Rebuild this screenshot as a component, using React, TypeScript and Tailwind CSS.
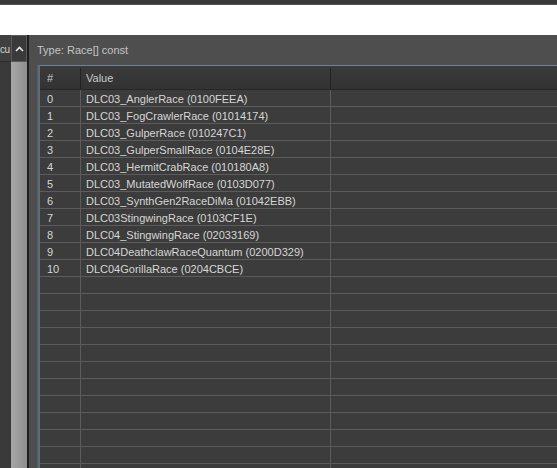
import React from 'react';

const races = [
    'DLC03_AnglerRace (0100FEEA)',
    'DLC03_FogCrawlerRace (01014174)',
    'DLC03_GulperRace (010247C1)',
    'DLC03_GulperSmallRace (0104E28E)',
    'DLC03_HermitCrabRace (010180A8)',
    'DLC03_MutatedWolfRace (0103D077)',
    'DLC03_SynthGen2RaceDiMa (01042EBB)',
    'DLC03StingwingRace (0103CF1E)',
    'DLC04_StingwingRace (02033169)',
    'DLC04DeathclawRaceQuantum (0200D329)',
    'DLC04GorillaRace (0204CBCE)',
];

export default function App() {
    // pad out with empty rows so the grid runs to the bottom edge
    const rows = [...races, ...Array(14).fill('')];

    return (
        <div className="w-[557px] h-[468px] overflow-hidden flex flex-col bg-[#3c3c3c] text-[11px] font-['Liberation_Sans',sans-serif] text-[#d6d6d6]">
            {/* top chrome */}
            <div className="h-[5px] shrink-0 bg-[#393939] border-b border-[#555]" />
            <div className="h-[30px] shrink-0 bg-white" />

            <div className="flex flex-1 min-h-0">
                {/* left pane edge */}
                <div className="w-[11px] flex flex-col bg-[#3a3a3a]">
                    <div className="h-[27px] shrink-0 flex items-center bg-[#3f3f3f] border-b border-[#2a2a2a] text-[#cfcfcf] text-[10px] tracking-tighter whitespace-nowrap pt-[2px]">
                        cu
                    </div>
                </div>

                {/* scrollbar */}
                <div className="w-[16px] flex flex-col">
                    <div className="h-[27px] shrink-0 flex items-center justify-center bg-[#3a3a3a] border border-[#5a5a5a]">
                        <svg width="9" height="6" viewBox="0 0 9 6">
                            <path d="M1 5 L4.5 1.5 L8 5" fill="none" stroke="#e8e8e8" strokeWidth="1.6" />
                        </svg>
                    </div>
                    <div className="flex-1 bg-gradient-to-r from-[#a6a6a6] to-[#8f8f8f]" />
                </div>
                <div className="w-[2px] bg-[#1e1e1e]" />

                {/* property panel */}
                <div className="flex-1 flex flex-col bg-[#4e4e4e] min-w-0">
                    <div className="h-[30px] shrink-0 flex items-center pl-[8px] text-[#c4c4c4]">
                        Type: Race[] const
                    </div>
                    <div className="flex-1 min-h-0 flex ml-[8px]">
                        <div className="w-[3px] bg-gradient-to-r from-[#585858] to-[#5f7585]" />
                        <div className="flex-1 flex flex-col bg-[#3c3c3c] border-t border-[#6a8599] min-w-0 overflow-hidden">
                            <div className="h-[24px] flex shrink-0 bg-gradient-to-b from-[#3a3a3a] to-[#333] border-b border-[#262626] text-[#cacaca] pt-[2px]">
                                <div className="w-[41px] pl-[7px] flex items-center border-r border-[#222]">#</div>
                                <div className="w-[250px] pl-[5px] flex items-center border-r border-[#222]">Value</div>
                                <div className="flex-1" />
                            </div>
                            {rows.map((name, i) => (
                                <div key={i} className="h-[17px] flex shrink-0 border-b border-[#5c5c5c]">
                                    <div className="w-[41px] pl-[7px] pt-[2px] flex items-center border-r border-[#5c5c5c]">
                                        {name ? i : ''}
                                    </div>
                                    <div className="w-[250px] pl-[5px] pt-[2px] flex items-center border-r border-[#5c5c5c] whitespace-nowrap">
                                        {name}
                                    </div>
                                    <div className="flex-1" />
                                </div>
                            ))}
                        </div>
                    </div>
                </div>
            </div>
        </div>
    );
}
